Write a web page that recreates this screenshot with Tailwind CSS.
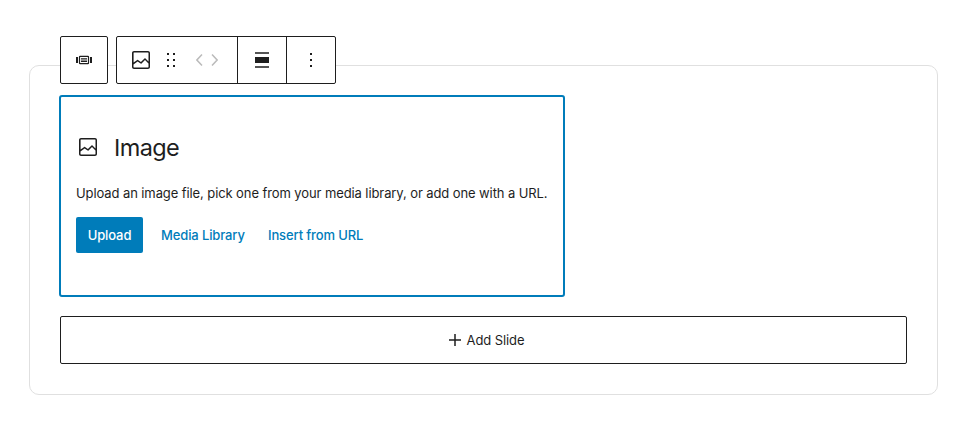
<!DOCTYPE html>
<html lang="en">
<head>
<meta charset="utf-8">
<title>Slider block</title>
<script src="https://cdn.jsdelivr.net/npm/@tailwindcss/browser@4"></script>
</head>
<body class="bg-white font-['Inter',sans-serif] text-[13px] text-[#1e1e1e]">
<main class="relative h-[442px] w-[968px] pt-[65px] pl-[29px]">
  <section class="flex h-[330px] w-[909px] flex-col rounded-[10px] border border-[#e0e0e0] pt-[29px] pl-[29px]">
    <div class="h-[202px] w-[506px] rounded-[3px] border-2 border-[#007cba] px-[15px] pt-[38px]">
      <div class="flex h-6 items-center gap-[14px]">
        <svg class="size-6" viewBox="0 0 24 24" fill="currentColor"><path d="M19 3H5c-1.1 0-2 .9-2 2v14c0 1.1.9 2 2 2h14c1.1 0 2-.9 2-2V5c0-1.1-.9-2-2-2zM5 4.5h14c.3 0 .5.2.5.5v8.4l-3-2.9c-.3-.3-.8-.3-1 0L11.9 14 9 12c-.3-.2-.6-.2-.8 0l-3.6 2.6V5c-.1-.3.1-.5.4-.5zm14 15H5c-.3 0-.5-.2-.5-.5v-2.4l4.1-3 3 1.9c.3.2.7.2.9-.1L16 12l3.5 3.4V19c0 .3-.2.5-.5.5z"/></svg>
        <h2 class="pt-[2px] text-[23.5px] leading-6 tracking-[-0.6px]">Image</h2>
      </div>
      <p class="mt-6 h-5 leading-5 tracking-[-0.096px] whitespace-nowrap">Upload an image file, pick one from your media library, or add one with a URL.</p>
      <div class="mt-[14px] flex h-9 items-center font-medium tracking-[-0.12px] text-[#007cba]">
        <button class="h-9 w-[67px] rounded-[2px] bg-[#007cba] pt-[2px] text-white">Upload</button>
        <button class="ml-[18px] w-[83px] pt-[2px] text-left whitespace-nowrap">Media Library</button>
        <button class="ml-6 w-[96px] pt-[2px] text-left whitespace-nowrap">Insert from URL</button>
      </div>
    </div>
    <button class="mt-[19px] ml-px flex h-12 w-[847px] items-center justify-center gap-[6px] rounded-[2px] border border-[#1e1e1e] pl-[6px]">
      <svg class="size-3" viewBox="0 0 12 12" fill="none" stroke="currentColor" stroke-width="1.5"><path d="M6 0v12M0 6h12"/></svg>
      <span class="pt-[2px] tracking-[-0.1px]">Add Slide</span>
    </button>
  </section>

  <!-- Block toolbar, floating over the card's top edge -->
  <div class="absolute top-9 left-[60px] flex h-12 gap-2">
    <div class="flex w-12 items-center justify-center rounded-[2px] border border-[#1e1e1e] bg-white">
      <svg class="h-5 w-6" viewBox="0 0 24 20" fill="currentColor"><path d="M4 7h2v6H4zM18 7h2v6h-2zM9 8.200h6v1.400H9zM9 10.600h6V12H9z"/><rect x="7.500" y="6.300" width="9" height="7.400" rx=".6" fill="none" stroke="currentColor" stroke-width="1.200"/></svg>
    </div>
    <div class="flex w-[220px] rounded-[2px] border border-[#1e1e1e] bg-white">
      <div class="flex w-[120px] items-center pl-3">
        <svg class="size-6" viewBox="0 0 24 24" fill="currentColor"><path d="M19 3H5c-1.1 0-2 .9-2 2v14c0 1.1.9 2 2 2h14c1.100 0 2-.9 2-2V5c0-1.100-.9-2-2-2zM5 4.500h14c.3 0 .5.2.5.5v8.400l-3-2.900c-.3-.3-.8-.3-1 0L11.900 14 9 12c-.3-.2-.6-.2-.8 0l-3.600 2.600V5c-.1-.3.1-.5.4-.5zm14 15H5c-.3 0-.5-.2-.5-.5v-2.400l4.100-3 3 1.900c.3.2.7.2.9-.1L16 12l3.500 3.400V19c0 .3-.2.5-.5.5z"/></svg>
        <svg class="ml-[14px] h-[14px] w-2" viewBox="0 0 8 14" fill="currentColor"><path d="M0 0h2v2H0zM6 0h2v2H6zM0 6h2v2H0zM6 6h2v2H6zM0 12h2v2H0zM6 12h2v2H6z"/></svg>
        <svg class="ml-[21px] h-3 w-[22px]" viewBox="0 0 22 12" fill="none" stroke="#bbbbbb" stroke-width="1.500"><path d="M6 .5.900 6 6 11.500M16 .5 21.100 6 16 11.500"/></svg>
      </div>
      <div class="flex w-[50px] items-center justify-center border-x border-[#1e1e1e]">
        <svg class="h-4 w-[14px]" viewBox="0 0 14 16" fill="currentColor"><path d="M0 .25h14v1.500H0zM0 5h14v6H0zM0 14.250h14v1.500H0z"/></svg>
      </div>
      <div class="flex w-12 items-center justify-center">
        <svg class="h-[14px] w-[2px]" viewBox="0 0 2 14" fill="currentColor"><path d="M0 0h2v2H0zM0 6h2v2H0zM0 12h2v2H0z"/></svg>
      </div>
    </div>
  </div>
</main>
</body>
</html>
